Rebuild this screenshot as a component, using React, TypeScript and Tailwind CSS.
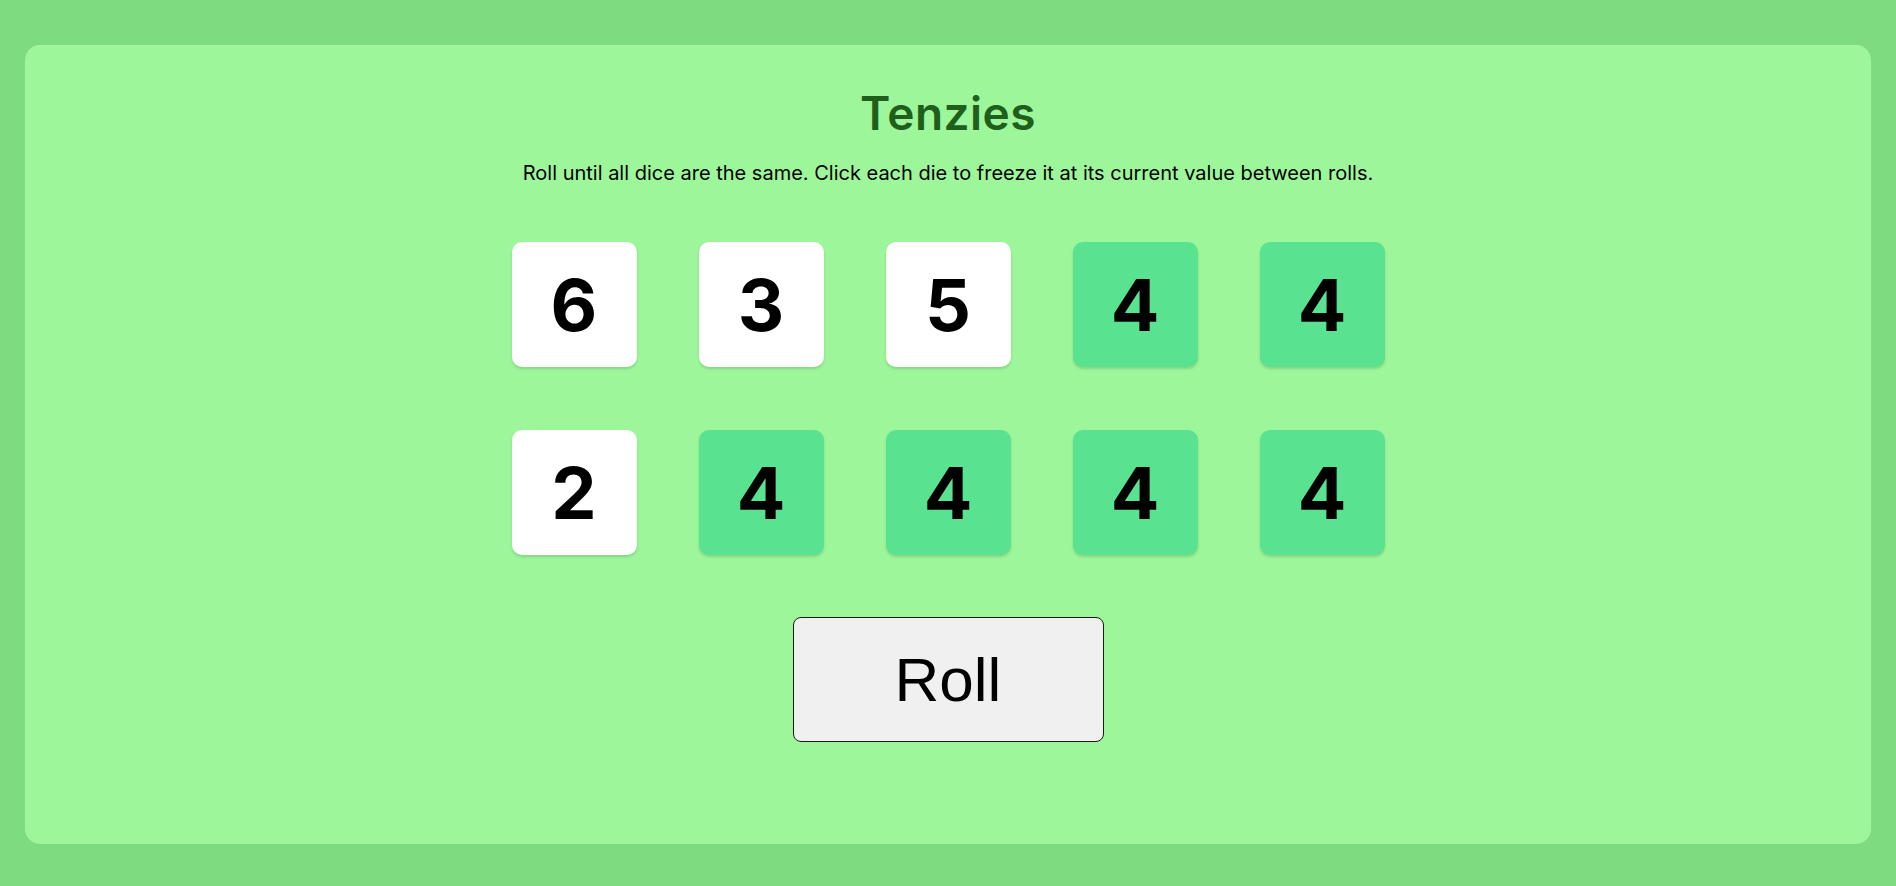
import { useState } from 'react';

type Die = { value: number; held: boolean };

const startDice: Die[] = [
  { value: 6, held: false },
  { value: 3, held: false },
  { value: 5, held: false },
  { value: 4, held: true },
  { value: 4, held: true },
  { value: 2, held: false },
  { value: 4, held: true },
  { value: 4, held: true },
  { value: 4, held: true },
  { value: 4, held: true },
];

export default function App() {
  const [dice, setDice] = useState<Die[]>(startDice);

  const hold = (i: number) =>
    setDice((d) => d.map((die, j) => (j === i ? { ...die, held: !die.held } : die)));

  const roll = () =>
    setDice((d) =>
      d.map((die) => (die.held ? die : { ...die, value: Math.ceil(Math.random() * 6) }))
    );

  return (
    <div className="h-screen bg-[#7fdb7f] px-[25px] pt-[45px] pb-[42px]">
      <main className="h-full rounded-[15px] bg-[#9df79a] flex flex-col items-center pt-[45px]">
        <h1 className="font-['Inter',sans-serif] font-semibold text-[46px] leading-none tracking-[0.5px] text-[#1f5f1b]">
          Tenzies
        </h1>
        <p className="mt-[27px] font-['Inter',sans-serif] text-[20px] leading-none text-black">
          Roll until all dice are the same. Click each die to freeze it at its current value between rolls.
        </p>

        <div className="mt-[59px] grid grid-cols-5 gap-x-[62px] gap-y-[63px]">
          {dice.map((die, i) => (
            <button
              key={i}
              onClick={() => hold(i)}
              className={`w-[125px] h-[125px] rounded-[10px] shadow-[0_2px_3px_rgba(0,0,0,0.15)] flex items-center justify-center font-['Inter',sans-serif] font-bold text-[72px] leading-none text-black ${
                die.held ? 'bg-[#59e391]' : 'bg-white'
              }`}
            >
              {die.value}
            </button>
          ))}
        </div>

        <button
          onClick={roll}
          className="mt-[62px] w-[311px] h-[125px] rounded-[8px] border-[1.5px] border-[#1a1a1a] bg-[#f0f0f0] font-['Liberation_Sans',Arial,sans-serif] text-[62px] leading-none text-black"
        >
          Roll
        </button>
      </main>
    </div>
  );
}
